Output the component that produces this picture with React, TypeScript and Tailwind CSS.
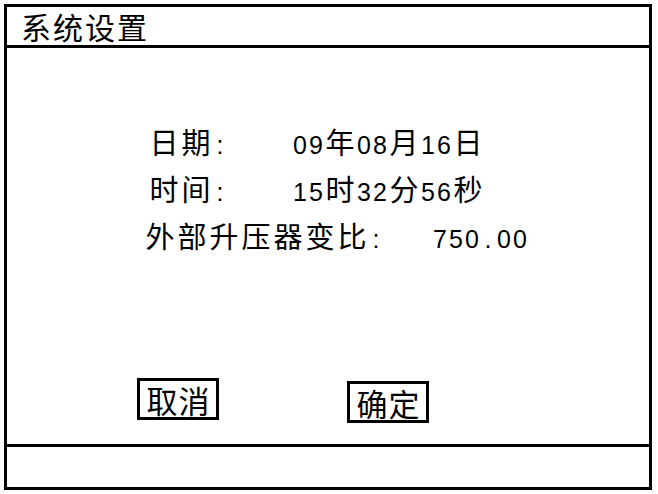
import React from "react";

// fixed-pitch text: full-width chars take 32px, half-width chars 16px
const Cells = ({ text, cjk, latin }: { text: string; cjk: string; latin: string }) => (
    <>
        {Array.from(text).map((ch, i) =>
            ch.charCodeAt(0) > 0x2e80 ? (
                <span key={i} className={`inline-block w-[32px] text-center ${cjk}`}>
                    {ch}
                </span>
            ) : (
                <span key={i} className={`inline-block w-[16px] text-center whitespace-pre ${latin}`}>
                    {ch}
                </span>
            )
        )}
    </>
);

const bodyCjk = "font-['Noto_Sans_CJK_SC',sans-serif] text-[29px]";
const bodyLatin = "font-['Liberation_Sans',sans-serif] text-[25px]";

const rows = [
    { text: "日期:    09年08月16日", indent: "pl-[141px]" },
    { text: "时间:    15时32分56秒", indent: "pl-[141px]" },
    { text: "外部升压器变比:   750.00", indent: "pl-[137px]" },
];

const App = () => {
    return (
        <div className="w-[658px] h-[494px] bg-white pt-[4px] pl-[4px] text-black">
            <div className="w-[648px] h-[486px] border-[3px] border-black flex flex-col">
                {/* title bar */}
                <div className="h-[41px] border-b-[3px] border-black flex items-center pl-[13px] leading-none">
                    <Cells text="系统设置" cjk="font-['Noto_Sans_CJK_SC',sans-serif] text-[30px]" latin={bodyLatin} />
                </div>

                {/* settings */}
                <div className="flex-1 pt-[70px]">
                    {rows.map((r) => (
                        <div key={r.text} className={`h-[47px] leading-[47px] whitespace-nowrap ${r.indent}`}>
                            <Cells text={r.text} cjk={bodyCjk} latin={bodyLatin} />
                        </div>
                    ))}

                    <div className="flex items-start pl-[130px] mt-[119px]">
                        <button
                            type="button"
                            className="h-[42px] px-[6px] border-[3px] border-black flex items-center leading-none"
                        >
                            <Cells text="取消" cjk="font-['Noto_Sans_CJK_SC',sans-serif] text-[31px]" latin={bodyLatin} />
                        </button>
                        <button
                            type="button"
                            className="ml-[128px] mt-[3px] h-[42px] px-[6px] border-[3px] border-black flex items-center leading-none"
                        >
                            <Cells text="确定" cjk="font-['Noto_Sans_CJK_SC',sans-serif] text-[31px]" latin={bodyLatin} />
                        </button>
                    </div>
                </div>

                {/* status bar */}
                <div className="h-[43px] border-t-[3px] border-black" />
            </div>
        </div>
    );
};

export default App;
